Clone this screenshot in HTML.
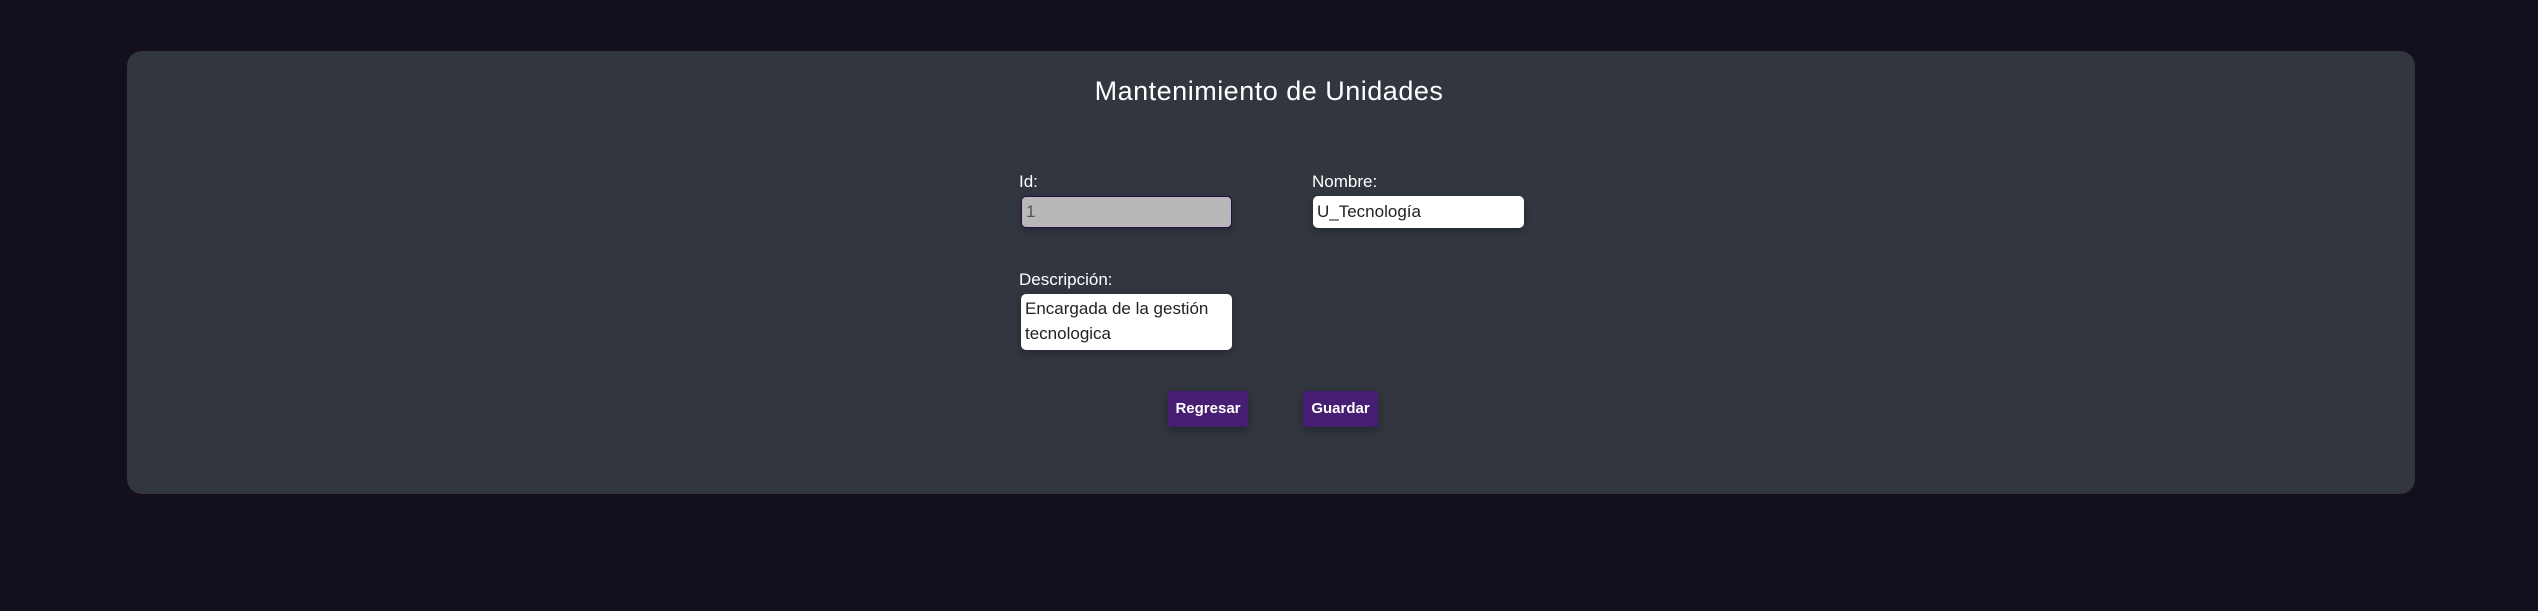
<!DOCTYPE html>
<html><head><meta charset="utf-8"><style>
html,body{margin:0;padding:0;width:2538px;height:611px;background:#130f1c;font-family:"Liberation Sans",sans-serif;overflow:hidden}
.card{position:absolute;left:127px;top:51px;width:2288px;height:443px;background:#31363f;border-radius:15px}
.t{position:absolute;left:0;width:100%;top:76px;text-align:center;color:#fff;font-size:27px;letter-spacing:0.5px}
.l{position:absolute;color:#fff;font-size:17px}
.in{position:absolute;background:#fff;border-radius:5px;box-shadow:0 3px 8px rgba(0,0,0,.25);color:#222;font-size:17px;box-sizing:border-box;padding-left:4px}
.b{position:absolute;background:#461e72;color:#fff;font-weight:bold;font-size:15px;text-align:center;line-height:36px;height:36px;box-shadow:0 3px 8px rgba(0,0,0,.3)}
</style></head><body>
<div class="card"></div>
<div class="t">Mantenimiento de Unidades</div>
<div class="l" style="left:1019px;top:172px">Id:</div>
<div class="in" style="left:1021px;top:196px;width:211px;height:32px;background:#b8b8b8;border:1px solid #2a0f50;line-height:30px;color:#555">1</div>
<div class="l" style="left:1312px;top:172px">Nombre:</div>
<div class="in" style="left:1313px;top:196px;width:211px;height:32px;line-height:32px">U_Tecnología</div>
<div class="l" style="left:1019px;top:270px">Descripción:</div>
<div class="in" style="left:1021px;top:294px;width:211px;height:56px;padding-top:2px;line-height:25px">Encargada de la gestión tecnologica</div>
<div class="b" style="left:1168px;top:391px;width:80px">Regresar</div>
<div class="b" style="left:1303px;top:391px;width:75px">Guardar</div>
</body></html>
